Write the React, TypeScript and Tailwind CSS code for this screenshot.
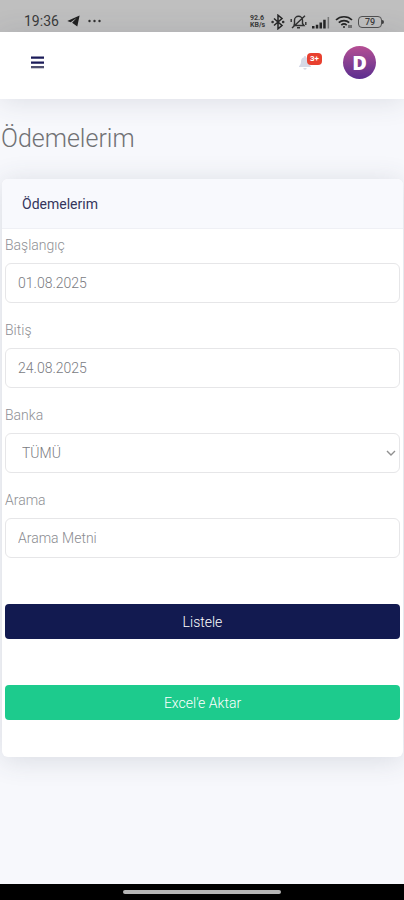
import { useState } from 'react';
import type { FormEvent } from 'react';

const inputClass =
  'block w-full h-10 rounded-md border border-[#e6e6e8] bg-white px-3 text-sm font-light text-[#7a7b7f] outline-none placeholder:text-[#8a8b90] focus:border-[#a5b0d8]';
const labelClass = 'block h-6 text-sm leading-6 font-light text-[#8e8f94]';

function StatusBar() {
  return (
    <div className="flex h-8 items-end justify-between bg-[#bfbfbf] pr-5 pb-0.5 pl-6 text-[#3a3a3a]">
      <div className="flex items-center gap-2 pb-px">
        <span className="text-sm leading-4">19:36</span>
        <svg width="13" height="12" viewBox="0 0 13 12" fill="#1f1f1f">
          <path d="M12.6.6.3 6.1l3.4 1.2L9.6 3 5.1 7.8l5.2 3.7z" />
        </svg>
        <svg width="13" height="4" viewBox="0 0 13 4" fill="#303030">
          <circle cx="1.5" cy="2" r="1.2" />
          <circle cx="6.5" cy="2" r="1.2" />
          <circle cx="11.5" cy="2" r="1.2" />
        </svg>
      </div>

      <div className="flex items-center gap-[5px]">
        <div className="w-4 text-[7px] leading-[7px] font-bold">
          <div>92.6</div>
          <div>KB/s</div>
        </div>
        {/* bluetooth */}
        <svg width="14" height="16" viewBox="0 0 14 16" fill="none" stroke="#252525" strokeWidth="1.5">
          <path d="M3 4.5l8 7-4 3.3V1.2l4 3.3-8 7" />
          <circle cx="1.6" cy="8" r=".5" />
          <circle cx="12.2" cy="8" r=".5" />
        </svg>
        {/* sessiz mod */}
        <svg width="17" height="16" viewBox="0 0 17 16" fill="none" stroke="#303030" strokeWidth="1.4">
          <path d="M4 11.5h10l-1.5-2V6.3a4 4 0 0 0-8 0v3.2zM7 13.8h3M2 14 15 1.8M1.2 5v3M15.8 8v3" />
        </svg>
        <svg width="18" height="13" viewBox="0 0 18 13" fill="#252525">
          <path d="M0 10h2.5v2.5H0zM3.8 8.7h2.5v3.8H3.8zM7.5 6.5H10v6H7.5zM11.2 3.8h2.5v8.7h-2.5z" />
          <path d="M15.6 1h1.5v11.5h-1.5z" fill="#777" />
        </svg>
        <svg width="18" height="14" viewBox="0 0 18 14" fill="none" stroke="#252525" strokeWidth="1.7">
          <path d="M1 5a11.5 11.5 0 0 1 16 0M3.8 7.7a7.5 7.5 0 0 1 10.4 0M6.3 10.2a4 4 0 0 1 5.4 0" />
          <circle cx="9" cy="12" r="1" fill="#252525" stroke="none" />
          <path d="M14 10v3M16 10v3" strokeWidth="1" />
        </svg>
        <div className="flex items-center">
          <span className="flex h-3 w-6 items-center justify-center rounded-sm border border-[#505050] text-[9px] leading-none font-medium">
            79
          </span>
          <span className="h-1 w-0.5 rounded-r-sm bg-[#404040]" />
        </div>
      </div>
    </div>
  );
}

function Navbar() {
  return (
    <header className="flex h-[67px] items-center justify-between bg-white pr-7 pb-1.5 pl-[31px] shadow-[0_2px_28px_rgba(58,66,85,0.14)]">
      <button type="button" aria-label="Menü" className="cursor-pointer">
        <svg width="13" height="13" viewBox="0 0 13 13">
          <path d="M0 .5h13v2.3H0zM0 5.4h13v2.3H0z" fill="#1b1b59" />
          <path d="M0 10h13v2.3H0z" fill="#505070" />
        </svg>
      </button>
      <div className="flex items-center gap-5">
        <button type="button" aria-label="Bildirimler" className="relative flex h-6 w-6 cursor-pointer items-center">
          <svg width="12" height="14" viewBox="0 0 12 14" fill="#d6d9e6">
            <path d="M5.2 0h1.6v1.2C9 1.6 10 3.2 10 5.5c0 2.5.7 3.5 2 4.7V11H0v-.8c1.3-1.2 2-2.2 2-4.7 0-2.3 1-3.9 3.2-4.3zM4.3 12h3.4a1.7 1.7 0 0 1-3.4 0z" />
          </svg>
          <span className="absolute top-0.5 left-2 flex h-3 w-[15px] items-center justify-center rounded bg-[#e8402f] text-[8px] leading-none font-bold text-white">
            3+
          </span>
        </button>
        <button
          type="button"
          aria-label="Profil"
          className="flex h-[33px] w-[33px] cursor-pointer items-center justify-center rounded-full bg-linear-to-b from-[#b64e93] to-[#5c2c8f] font-['Open_Sans',sans-serif] text-xl leading-none font-extrabold text-white"
        >
          D
        </button>
      </div>
    </header>
  );
}

export default function App() {
  const [formData, setFormData] = useState({
    baslangic: '01.08.2025',
    bitis: '24.08.2025',
    banka: '',
    arama: '',
  });

  const handleChange = (e: { target: { name: string; value: string } }) => {
    setFormData({
      ...formData,
      [e.target.name]: e.target.value,
    });
  };

  const handleSubmit = (e: FormEvent) => {
    e.preventDefault();
  };

  return (
    <div className="flex min-h-screen flex-col bg-[#f7f8fc] font-[Roboto,sans-serif]">
      <StatusBar />
      <Navbar />

      <main className="flex-1 pb-8">
        <h1 className="px-px pt-6 text-[25px] leading-8 font-light text-[#707174]">Ödemelerim</h1>

        <section className="mt-6 mr-px ml-0.5 rounded-md bg-white shadow-[0_3px_28px_rgba(58,66,85,0.16)]">
          <div className="flex h-[50px] items-center rounded-t-md border-b border-[#eff0f5] bg-[#f8f9fd] px-5">
            <h2 className="text-sm font-normal text-[#34355c]">Ödemelerim</h2>
          </div>

          <form onSubmit={handleSubmit} className="px-[3px] pt-1 pb-[37px]">
            <div className="flex flex-col gap-[15px]">
              <div>
                <label htmlFor="baslangic" className={labelClass}>Başlangıç</label>
                <input
                  id="baslangic"
                  name="baslangic"
                  type="text"
                  value={formData.baslangic}
                  onChange={handleChange}
                  className={`mt-1.5 ${inputClass}`}
                />
              </div>
              <div>
                <label htmlFor="bitis" className={labelClass}>Bitiş</label>
                <input
                  id="bitis"
                  name="bitis"
                  type="text"
                  value={formData.bitis}
                  onChange={handleChange}
                  className={`mt-1.5 ${inputClass}`}
                />
              </div>
              <div>
                <label htmlFor="banka" className={labelClass}>Banka</label>
                <div className="relative mt-1.5">
                  <select
                    id="banka"
                    name="banka"
                    value={formData.banka}
                    onChange={handleChange}
                    className="block h-10 w-full appearance-none rounded-md border border-[#e6e6e8] bg-white px-4 text-sm font-light text-[#7a7b7f] outline-none focus:border-[#a5b0d8]"
                  >
                    <option value="">TÜMÜ</option>
                  </select>
                  <svg
                    className="pointer-events-none absolute top-4 right-1"
                    width="10"
                    height="8"
                    viewBox="0 0 10 8"
                    fill="none"
                    stroke="#909090"
                    strokeWidth="1.4"
                  >
                    <path d="M1 2l4 4 4-4" />
                  </svg>
                </div>
              </div>
              <div>
                <label htmlFor="arama" className={labelClass}>Arama</label>
                <input
                  id="arama"
                  name="arama"
                  type="text"
                  placeholder="Arama Metni"
                  value={formData.arama}
                  onChange={handleChange}
                  className={`mt-1.5 ${inputClass}`}
                />
              </div>
            </div>

            <div className="mt-[46px] flex flex-col gap-[46px]">
              <button
                type="submit"
                className="h-[35px] w-full cursor-pointer rounded bg-[#121a50] text-sm font-light text-white"
              >
                Listele
              </button>
              <button
                type="button"
                className="h-[35px] w-full cursor-pointer rounded bg-[#1dcb8d] text-sm font-light text-white"
              >
                Excel'e Aktar
              </button>
            </div>
          </form>
        </section>
      </main>

      <div className="flex h-4 items-center justify-center bg-black">
        <div className="h-1 w-[39%] rounded-full bg-[#b5b5b5]" />
      </div>
    </div>
  );
}
